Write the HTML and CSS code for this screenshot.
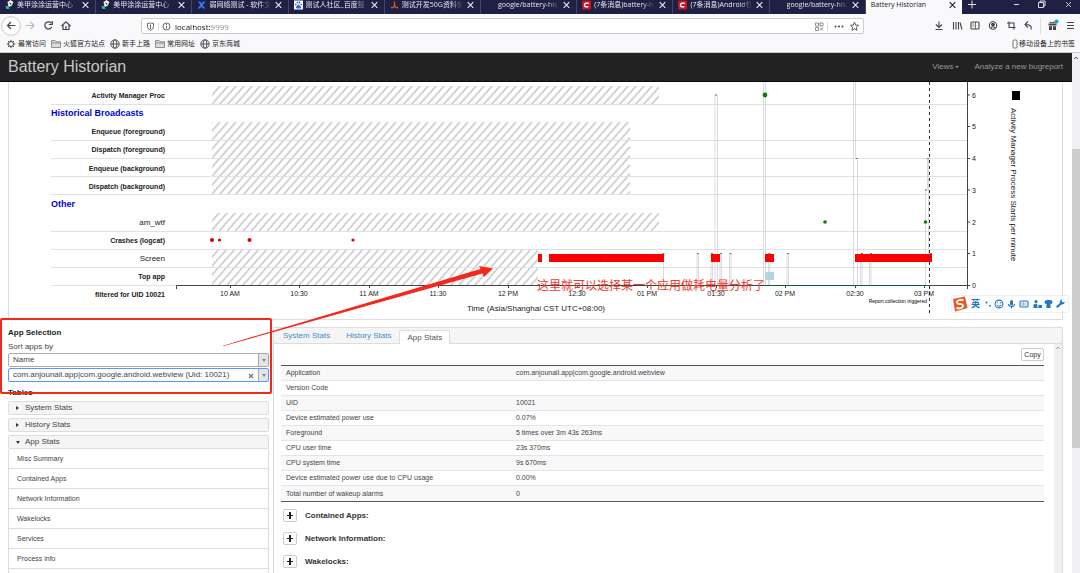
FILE: index.html
```html
<!DOCTYPE html>
<html lang="zh-CN">
<head>
<meta charset="utf-8">
<title>Battery Historian</title>
<link rel="stylesheet" href="styles.css">
</head>
<body>
<svg class="defs" aria-hidden="true">
  <symbol id="x" viewBox="0 0 8 8"><path d="M1.5 1.5 6.5 6.5M6.5 1.5 1.5 6.5" fill="none" stroke="currentColor" stroke-width="1"/></symbol>
  <symbol id="leaf" viewBox="0 0 8 10"><path d="M2 2 5 0 8 2 6 6 3 7Z" fill="#eee"/><path d="M0 6 3 6 4 9 1 9Z" fill="#2fbf8a"/><path d="M4 3 6 3 5 5Z" fill="#333"/></symbol>
  <symbol id="csdn" viewBox="0 0 10 10"><rect width="10" height="10" rx="1" fill="#c9151b"/><path d="M7.6 3H4.6Q3 3 2.8 5T4.2 7H7" fill="none" stroke="#fff" stroke-width="1.6"/></symbol>
  <symbol id="folder" viewBox="0 0 10 10"><path d="M.5 8.5V1.5H4L5 2.8H9.5V8.5ZM.5 4H9.5" fill="#ddd" stroke="#777" stroke-width=".8"/></symbol>
  <symbol id="globe" viewBox="0 0 10 10"><g fill="none" stroke="#444" stroke-width=".9"><circle cx="5" cy="5" r="4.2"/><ellipse cx="5" cy="5" rx="1.9" ry="4.2"/><path d="M.8 5H9.2"/></g></symbol>
</svg>

<header class="browser">
  <nav class="tabs">
    <a class="tab" href="#"><svg class="fav"><use href="#leaf"/></svg><span class="tab-name">美甲涂涂运营中心</span><svg class="close"><use href="#x"/></svg></a>
    <a class="tab" href="#"><svg class="fav"><use href="#leaf"/></svg><span class="tab-name">美甲涂涂运营中心</span><svg class="close"><use href="#x"/></svg></a>
    <a class="tab" href="#"><svg class="fav" viewBox="0 0 10 10"><path d="M1 1H3.5L5 3 7 1H9.5L6.5 5 9 9H6.5L5 7 3 9H.5L3.8 5Z" fill="#2e7df0"/></svg><span class="tab-name">弱网络测试 - 软件文</span><svg class="close"><use href="#x"/></svg></a>
    <a class="tab" href="#"><svg class="fav" viewBox="0 0 10 10"><rect width="10" height="10" fill="#fff"/><g fill="#3467dc"><path d="M5 4.2 8 7.2Q8 9 6.5 8.8H3.5Q2 9 2 7.2Z"/><circle cx="2" cy="4.5" r="1"/><circle cx="3.8" cy="2.2" r="1"/><circle cx="6.2" cy="2.2" r="1"/><circle cx="8" cy="4.5" r="1"/></g></svg><span class="tab-name">测试人社区_百度搜</span><svg class="close"><use href="#x"/></svg></a>
    <a class="tab" href="#"><svg class="fav" viewBox="0 0 10 10"><path d="M5 1V6M5 5 3.5 8H1M5 5 6.5 8H9" fill="none" stroke="#e5562a" stroke-width="1.4"/></svg><span class="tab-name">测试开发50G资料领</span><svg class="close"><use href="#x"/></svg></a>
    <a class="tab" href="#"><svg class="fav"></svg><span class="tab-name">google/battery-his</span><svg class="close"><use href="#x"/></svg></a>
    <a class="tab" href="#"><svg class="fav"><use href="#csdn"/></svg><span class="tab-name">(7条消息)battery-h</span><svg class="close"><use href="#x"/></svg></a>
    <a class="tab" href="#"><svg class="fav"><use href="#csdn"/></svg><span class="tab-name">(7条消息)Android性</span><svg class="close"><use href="#x"/></svg></a>
    <a class="tab" href="#"><svg class="fav"></svg><span class="tab-name">google/battery-his</span><svg class="close"><use href="#x"/></svg></a>
    <a class="tab active" href="#"><span class="tab-name">Battery Historian</span><svg class="close"><use href="#x"/></svg></a>
    <svg class="window-buttons" viewBox="0 0 118 14"><g fill="none" stroke="#ddd"><path d="M6 4.5H14M10 .5V8.500M52 4.500H57"/><path d="M76.500 2.500H81.500V7.500H76.500ZM78 2.500V1H83V6H81.500"/><path d="M104 2 109 7M109 2 104 7" stroke-width=".9"/></g></svg>
  </nav>

  <div class="toolbar">
    <svg class="nav-icons" viewBox="0 0 84 24"><circle cx="11" cy="12" r="9.300" fill="#fff" stroke="#bbb" stroke-width=".8"/><g fill="none" stroke="#444" stroke-width="1.200"><path d="M15.500 11.500H7.500M11 8 7.500 11.500 11 15"/><path d="M26 11.500H34M30.500 8 34 11.500 30.500 15" stroke="#bbb"/><path d="M51.500 9.500A3.600 3.600 0 1 0 51.700 13"/><path d="M52.300 7V10.500H48.800" /><path d="M61.500 12 66 7.800 70.500 12M63 11V15.500H69V11"/><path d="M66 12V15.500"/></g></svg>
    <div class="urlbar">
      <svg class="url-icons" viewBox="0 0 32 15"><g fill="none" stroke="#555" stroke-width=".9"><path d="M5.500 4.500Q8 4.500 8.500 4 9 4.500 11.500 4.500V7.500Q11.500 10 8.500 11.500 5.500 10 5.500 7.500Z"/><path d="M8.500 5.500V10"/><circle cx="24.500" cy="7.500" r="3.500"/><path d="M24.500 7V9.500M24.500 5.200V6.200"/></g><path d="M16.500 3V12" stroke="#ddd"/></svg>
      <input class="url" aria-label="Address" value="localhost:9999">
      <svg class="url-actions" viewBox="0 0 50 15"><path d="M2.500 4H5.500V7H2.500ZM7 4H10V7H7ZM2.500 8.500H5.500V11.500H2.500ZM7 8.500 10 11.500M10 8.500 7 11.500" fill="none" stroke="#777" stroke-width=".8"/><path d="M14.500 3V12" stroke="#ddd"/><g fill="#444"><circle cx="22.500" cy="7.500" r="1"/><circle cx="26" cy="7.500" r="1"/><circle cx="29.500" cy="7.500" r="1"/></g><path d="M41.500 3.200 42.700 6 45.500 6.300 43.400 8.300 44 11.300 41.500 9.700 39 11.300 39.600 8.300 37.500 6.300 40.300 6Z" fill="none" stroke="#444" stroke-width=".9"/></svg>
    </div>
    <svg class="tool-icons" viewBox="0 0 150 24"><g fill="none" stroke="#444" stroke-width="1.100"><path d="M9 7.500V13M6 10.500 9 13.500 12 10.500M5.500 15.500H12.500"/><path d="M23.500 8V15.500M26 8V15.500M28.500 8V15.500M30 8.500 32 15.500"/><rect x="41" y="8" width="8" height="7" rx="1"/><path d="M42.500 10H44.500M42.500 12H44.500M45.500 8V15" stroke-width=".7"/><circle cx="63" cy="11.500" r="3.700"/><circle cx="63" cy="10.500" r="1.300" fill="#444"/><path d="M60.800 14Q63 11.500 65.200 14"/><path d="M77 9H84V15.500M79 7.500V13.500H85.500"/><path d="M101 15.500Q102.500 10.500 95 10.500M98 7.500 95 10.500 98 13.500"/><path d="M137 8.500H144M137 11.500H144M137 14.500H144"/></g><path d="M110.500 4V20" stroke="#ddd"/><path d="M118.500 9.500H126.500V11.500H118.500ZM119 12.200H122V16H119ZM123 12.200H126V16H123ZM120 9 119.500 7.500 122 8.500 124 7.500 125 9Z" fill="#444"/><circle cx="126.500" cy="7.500" r="2" fill="#00a6e8"/></svg>
  </div>

  <nav class="bookmarks">
    <a href="#"><svg viewBox="0 0 10 10"><circle cx="5" cy="5" r="2.500" fill="none" stroke="#444"/><path d="M5 .8V2.500M5 7.500V9.200M.8 5H2.500M7.500 5H9.200M2 2 3.200 3.200M6.800 6.800 8 8M8 2 6.800 3.200M3.200 6.800 2 8" stroke="#444"/></svg>最常访问</a>
    <a href="#"><svg><use href="#folder"/></svg>火狐官方站点</a>
    <a href="#"><svg><use href="#globe"/></svg>新手上路</a>
    <a href="#"><svg><use href="#folder"/></svg>常用网址</a>
    <a href="#"><svg><use href="#globe"/></svg>京东商城</a>
    <a class="mobile" href="#"><svg viewBox="0 0 6 10"><rect x="1" y="1" width="4" height="8" rx="1" fill="none" stroke="#555" stroke-width=".8"/></svg>移动设备上的书签</a>
  </nav>
</header>

<div class="viewport">
  <div class="page">
    <header class="navbar">
      <a class="brand" href="#">Battery Historian</a>
      <a class="nav-link" href="#">Views<span class="caret"></span></a>
      <a class="nav-link" href="#">Analyze a new bugreport</a>
    </header>

    <section class="chart-panel">
      <svg class="chart" viewBox="9 82 1053 237" role="img" aria-label="Battery timeline">
        <defs><pattern id="hatch" width="8" height="9" patternUnits="userSpaceOnUse" x="212" y="86"><path d="M-1 10 9 -1M-1 1 1 -1M7 10 9 8" stroke="#d2d2d5" stroke-width="2"/></pattern></defs>
        <g fill="url(#hatch)"><path d="M212 86H659V104H212ZM212 122H630V195H212ZM212 213H659V231H212ZM212 249H538V285H212Z"/></g>
        <path class="grid" d="M51 104.500H967M51 140.500H967M51 158.500H967M51 176.500H967M51 194.500H967M51 231.500H967M51 249.500H967M51 267.500H967M51 285.500H176"/>
        <path class="series" d="M663.500 285V253.500M697 285V253.500H698.500V285M711 285V253.500H712.500V285M715 285V95H717.500V285M720 285V253.500H721.500V285M729.500 285V253.500H731V285M763.500 285V82M765.500 82V285M768.500 285V253.500H770V285M787 285V253.500H788.500V285M853.500 285V82M855.500 82V158.500H857.500V285M860.500 285V253.500H862V285M869.500 285V253.500H871V285M925.500 285V190H927.500V158.500H928.500V253.500H931"/>
        <path class="caps" d="M662.500 253.500h2M697 253.500h2M711 253.500h2M715 95h2M720 253.500h2M729.500 253.500h2M768.500 253.500h2M787 253.500h2M856 158.500h2M861 253.500h2M870 253.500h2M925 190h2M927 158.500h2M930 253.500h2"/>
        <path d="M538 254H542V262H538ZM549 254H664V262H549ZM711 254H720V262H711ZM765 254H774V262H765ZM855 254H932V262H855Z" fill="#f00"/>
        <path d="M600.500 254V262" stroke="#d00" stroke-width=".6"/>
        <rect x="765" y="272" width="9" height="8" fill="#b4d3e3"/>
        <g fill="#e00000"><circle cx="212" cy="240" r="2"/><circle cx="219.500" cy="240" r="1.600"/><circle cx="249.500" cy="240" r="2"/><circle cx="353" cy="240" r="1.600"/></g>
        <g fill="#0a7f0a"><circle cx="765" cy="95" r="2.400"/><circle cx="825" cy="222" r="1.800"/><circle cx="925.500" cy="222" r="1.800"/></g>
        <path class="axis" d="M176.500 289V285.500H967.500V82M967.500 285V289M230.500 285V288M299.500 285V288M369.500 285V288M438.500 285V288M508.500 285V288M577.500 285V288M647.500 285V288M716.500 285V288M785.500 285V288M855.500 285V288M924.500 285V288M967 95H970M967 126.500H970M967 158.500H970M967 190H970M967 222H970M967 253.500H970M967 285.500H970"/>
        <path d="M765 285.500H925" stroke="#063" stroke-width="1"/>
        <path d="M929.500 82V316" stroke="#333" stroke-dasharray="3 3"/>
        <g class="row-label"><text x="165" y="98">Activity Manager Proc</text><text x="165" y="134">Enqueue (foreground)</text><text x="165" y="152">Dispatch (foreground)</text><text x="165" y="171">Enqueue (background)</text><text x="165" y="189">Dispatch (background)</text><text class="plain" x="165" y="225">am_wtf</text><text x="165" y="243">Crashes (logcat)</text><text class="plain" x="165" y="261">Screen</text><text x="165" y="279">Top app</text><text x="165" y="297">filtered for UID 10021</text></g>
        <g class="group-label"><text x="51" y="116">Historical Broadcasts</text><text x="51" y="207">Other</text></g>
        <g class="tick"><text x="230" y="296">10 AM</text><text x="299" y="296">10:30</text><text x="369" y="296">11 AM</text><text x="438" y="296">11:30</text><text x="508" y="296">12 PM</text><text x="577" y="296">12:30</text><text x="647" y="296">01 PM</text><text x="716" y="296">01:30</text><text x="785" y="296">02 PM</text><text x="855" y="296">02:30</text><text x="924" y="296">03 PM</text><text x="974" y="98">6</text><text x="974" y="129">5</text><text x="974" y="161">4</text><text x="974" y="193">3</text><text x="974" y="225">2</text><text x="974" y="256">1</text><text x="974" y="288">0</text></g>
        <text class="axis-title" x="536" y="311">Time (Asia/Shanghai CST UTC+08:00)</text>
        <text class="note" x="927" y="303">Report collection triggered</text>
        <rect x="1012" y="91" width="8" height="9"/>
        <text class="legend" transform="translate(1011 108) rotate(90)">Activity Manager Process Starts per minute</text>
      </svg>
    </section>

    <main class="columns">
      <aside class="sidebar">
        <h2 class="side-title">App Selection</h2>
        <label class="side-label" for="sort">Sort apps by</label>
        <div class="picker"><select id="sort"><option>Name</option></select><span class="drop"></span></div>
        <div class="picker focused"><select id="app" aria-label="Application"><option>com.anjounail.app|com.google.android.webview (Uid: 10021)</option></select><button class="clear" aria-label="Clear selection"><svg viewBox="0 0 6 6"><path d="M1 1 5 5M5 1 1 5" stroke="#777" stroke-width="1.300"/></svg></button><span class="drop"></span></div>
        <h2 class="side-title tables-title">Tables</h2>
        <nav class="accordion">
          <button class="group"><span class="arrow"></span>System Stats</button>
          <button class="group"><span class="arrow"></span>History Stats</button>
          <div>
            <button class="group" aria-expanded="true"><span class="arrow down"></span>App Stats</button>
            <ul class="items"><li><a href="#">Misc Summary</a></li><li><a href="#">Contained Apps</a></li><li><a href="#">Network Information</a></li><li><a href="#">Wakelocks</a></li><li><a href="#">Services</a></li><li><a href="#">Process info</a></li><li></li></ul>
          </div>
        </nav>
      </aside>

      <section class="details">
        <nav class="detail-tabs"><a href="#">System Stats</a><a href="#">History Stats</a><a class="current" href="#">App Stats</a></nav>
        <div class="detail-body">
          <div class="detail-content">
            <button class="copy">Copy</button>
            <table class="stats">
              <tr><th scope="row">Application</th><td>com.anjounail.app|com.google.android.webview</td></tr>
              <tr><th scope="row">Version Code</th><td></td></tr>
              <tr><th scope="row">UID</th><td>10021</td></tr>
              <tr><th scope="row">Device estimated power use</th><td>0.07%</td></tr>
              <tr><th scope="row">Foreground</th><td>5 times over 3m 43s 263ms</td></tr>
              <tr><th scope="row">CPU user time</th><td>23s 370ms</td></tr>
              <tr><th scope="row">CPU system time</th><td>9s 670ms</td></tr>
              <tr><th scope="row">Device estimated power use due to CPU usage</th><td>0.00%</td></tr>
              <tr><th scope="row">Total number of wakeup alarms</th><td>0</td></tr>
            </table>
            <div class="sections">
              <h3><button class="plus" aria-label="Expand Contained Apps"></button>Contained Apps:</h3>
              <h3><button class="plus" aria-label="Expand Network Information"></button>Network Information:</h3>
              <h3><button class="plus" aria-label="Expand Wakelocks"></button>Wakelocks:</h3>
            </div>
          </div>
          <div class="inner-scroll"><svg viewBox="0 0 8 8"><path d="M2 5 4 3 6 5" fill="none" stroke="#aaa"/></svg></div>
        </div>
      </section>
    </main>
  </div>
  <div class="scrollbar"><svg viewBox="0 0 8 8"><path d="M2 6 4 4 6 6" fill="none" stroke="#555"/></svg><div class="thumb"></div></div>
</div>

<svg class="annotation" viewBox="0 0 1080 573">
  <rect x="1" y="319" width="270" height="74" rx="1" fill="none" stroke="#ee2a1e" stroke-width="2"/>
  <path d="M223 345.700 480.500 269 479 266 493 268.500 484 277 482.500 273.500 223 346.300Z" fill="#f5261b"/>
  <text x="537" y="290">这里就可以选择某一个应用做耗电量分析了</text>
</svg>

<div class="ime">
  <svg class="sogou" viewBox="0 0 16 16"><path d="M1 3 13 .5 15.500 12 3 15.500Z" fill="#ea5a24"/><path d="M11.500 4Q5 3.500 5 6T9 8Q12 9 10.500 11T4.500 12" fill="none" stroke="#fff" stroke-width="1.800"/></svg>
  <span>英</span>
  <svg class="ime-icons" viewBox="0 0 84 12"><g fill="none" stroke="#1e76c4" stroke-width="1.100"><circle cx="16" cy="6" r="3.900"/><path d="M14 7Q16 9.500 18 7M14.500 4.200V5.200M17.500 4.200V5.200"/><path d="M25.500 6Q25.500 8.500 28.500 8.500T31.500 6M28.500 8.500V10.500"/><rect x="37" y="3" width="8" height="6" rx="1"/><path d="M38.500 5H43.500M38.500 7H43.500" stroke-dasharray="1 .6"/></g><g fill="#1e76c4"><circle cx="3.500" cy="4.500" r="1.100"/><path d="M6 7h2l-1 2.500z"/><rect x="27" y="2" width="3" height="5.500" rx="1.500"/><circle cx="53" cy="3.500" r="1.600"/><path d="M50.500 10V7Q51 5.500 53 5.500L54.500 7V10ZM55.500 7H59V10H55.500Z"/><path d="M61.500 3 64 2H67L69.500 3 69 6 67.500 5.500V10H63.500V5.500L62 6Z"/><path d="M73 8.500 77 5Q76 2 79.500 1.500L78.500 3.500 80 4.500 81.500 3.500Q82 6.500 78.500 6.500L74.500 10Z"/></g></svg>
</div>
</body>
</html>
```
FILE: styles.css
```css
* { box-sizing: border-box; }
body { margin: 0; height: 100vh; display: flex; flex-direction: column; overflow: hidden; position: relative; background: #fff; color: #444; font: 8px/10px "Liberation Sans", "Noto Sans CJK SC", sans-serif; }
a { color: inherit; text-decoration: none; }
button, select, input { font: inherit; color: inherit; margin: 0; padding: 0; border: 0; background: none; border-radius: 0; }
h2, h3, ul { margin: 0; padding: 0; font-size: inherit; list-style: none; }
svg { display: block; flex: none; }
.defs { width: 0; height: 0; position: absolute; }

.browser { flex: none; background: #f9f9fb; color: #222; font: 7px/10px "Open Sans", "Noto Sans CJK SC", sans-serif; border-bottom: 1px solid #ccc; }
.tabs { display: grid; grid-template-columns: repeat(10, minmax(0, 1fr)) 118px; height: 14px; background: #1f2044; color: #e8e8f0; }
.tab { display: flex; align-items: flex-start; padding: 0 5px; gap: 3px; border-right: 1px solid #44456a; white-space: nowrap; }
.fav, .close { width: 9px; height: 10px; }
.close { margin-left: auto; }
.tab-name { flex: 1; overflow: hidden; mask-image: linear-gradient(to right, #000 80%, transparent); }
.active { background: #f9f9fb; color: #222; border: 0; }
.active .tab-name { mask-image: none; }
.window-buttons { width: 118px; height: 14px; }
.toolbar { display: flex; align-items: center; height: 24px; }
.nav-icons { width: 84px; height: 24px; }
.urlbar { flex: 1; margin: 0 66px 0 57px; height: 16px; display: flex; align-items: center; background: #fff; border: 1px solid #ccc; border-radius: 2px; }
.url-icons { width: 32px; height: 15px; }
.url { flex: 1; min-width: 0; height: 14px; font-size: 8px; margin-left: 1px; outline: 0; color: transparent; background: linear-gradient(to right, #111 35px, #888 35px); background-clip: text; -webkit-background-clip: text; }
.url-actions { width: 50px; height: 15px; }
.tool-icons { width: 150px; height: 24px; }
.bookmarks { display: flex; gap: 5px; height: 14px; padding: 0 5px 3px 6px; align-items: center; }
.bookmarks a { display: flex; align-items: center; gap: 2px; }
.bookmarks svg { width: 10px; height: 10px; }
.bookmarks .mobile { margin-left: auto; gap: 1px; }
.bookmarks .mobile svg { width: 6px; }

.viewport { flex: 1; min-height: 0; display: flex; }
.page { flex: 1; min-width: 0; display: flex; flex-direction: column; }
.navbar { flex: none; height: 29px; background: #222; color: #999; display: flex; align-items: center; gap: 16px; padding: 0 9px 0 8px; border-bottom: 1px solid #080808; }
.brand { font-size: 16px; line-height: 20px; color: #c8c8c8; margin-right: auto; }
.nav-link { display: flex; align-items: center; gap: 1px; }
.caret { border: 2px solid transparent; border-top-color: currentColor; border-bottom: 0; }
.chart-panel { flex: none; margin: 0 9px 7px 8px; border: 1px solid #ddd; border-top: 0; }
.chart { width: 100%; height: auto; }
.grid { stroke: #e0e0e6; fill: none; }
.series { stroke: #ccccd2; fill: none; stroke-width: 1; opacity: .7; }
.caps { stroke: #777; }
.axis { stroke: #444; fill: none; }
.row-label text { font-weight: bold; font-size: 7px; text-anchor: end; fill: #222; }
.row-label .plain { font-weight: normal; font-size: 8px; }
.group-label text { font-weight: bold; font-size: 9px; fill: #0000dd; }
.tick text { font-size: 7px; text-anchor: middle; fill: #222; }
.axis-title { font-size: 8px; text-anchor: middle; fill: #222; }
.note { font-size: 5px; text-anchor: end; }
.legend { font-size: 8px; fill: #222; }

.columns { flex: 1; min-height: 0; display: grid; grid-template-columns: 261px minmax(0, 1fr); gap: 4px; padding: 0 9px 0 8px; }
.sidebar { display: flex; flex-direction: column; padding-top: 1px; }
.side-title { font-weight: bold; color: #222; }
.side-label { margin: 4px 0 1px; }
.picker { position: relative; height: 14px; margin-bottom: 1px; }
.picker select { display: block; appearance: none; width: 100%; height: 14px; padding: 0 24px 0 4px; border: 1px solid #aaa; border-radius: 2px; color: #444; background: linear-gradient(to left, #e4e4e4 9px, #aaa 9px, #aaa 10px, transparent 10px), #fff; }
.picker.focused select { border-color: #5897fb; }
.drop { position: absolute; right: 3px; top: 6px; border: 2px solid transparent; border-top: 3px solid #888; border-bottom: 0; pointer-events: none; }
.clear { position: absolute; right: 14px; top: 4px; width: 7px; height: 7px; }
.clear svg { width: 6px; height: 6px; }
.tables-title { margin-top: 5px; }
.accordion { display: flex; flex-direction: column; gap: 3px; margin-top: 3px; }
.group { width: 100%; height: 14px; display: flex; align-items: center; gap: 5px; padding: 0 7px; background: #f5f5f5; border: 1px solid #ddd; border-radius: 2px; }
.arrow { border: 2px solid transparent; border-left: 3px solid #333; border-right: 0; width: 4px; }
.arrow.down { border: 2px solid transparent; border-top: 3px solid #333; border-bottom: 0; }
.items { font-size: 7px; border: 1px solid #ddd; border-top: 0; }
.items li { height: 20px; padding: 5px 8px; border-bottom: 1px solid #ddd; }

.details { border: 1px solid #ddd; border-bottom: 0; display: flex; flex-direction: column; min-height: 0; }
.detail-tabs { flex: none; height: 16px; display: flex; align-items: flex-end; background: #f5f5f5; border-bottom: 1px solid #ddd; color: #428bca; padding-left: 1px; }
.detail-tabs a { padding: 3px 8px 2px; height: 15px; }
.detail-tabs .current { background: #fff; color: #555; border: 1px solid #ddd; border-bottom: 0; height: 14px; padding: 2px 7px; border-radius: 2px 2px 0 0; margin-bottom: -1px; }
.detail-body { flex: 1; min-height: 0; display: flex; }
.detail-content { flex: 1; padding: 4px 10px 0 7px; display: flex; flex-direction: column; min-width: 0; }
.copy { align-self: flex-end; width: 23px; height: 13px; border: 1px solid #ccc; border-radius: 2px; font-size: 7px; color: #333; }
.stats { margin-top: 4px; border-collapse: separate; border-spacing: 0; border-top: 1px solid #555; border-bottom: 1px solid #555; font-size: 7px; table-layout: fixed; width: 100%; }
.stats th, .stats td { height: 15px; padding: 0 5px; font-weight: normal; text-align: left; border-bottom: 1px solid #e5e5e5; }
.stats th { width: 230px; }
.stats tr:nth-child(odd) { background: #f8f8fa; }
.stats tr:last-child > * { border-bottom: 0; }
.sections { display: flex; flex-direction: column; gap: 10px; padding: 7px 2px 0; }
.sections h3 { display: flex; align-items: center; gap: 8px; height: 13px; color: #333; }
.plus { width: 14px; height: 13px; border: 1px solid #ccc; border-radius: 2px; background: linear-gradient(#222, #222) center / 6px 1px no-repeat, linear-gradient(#222, #222) center / 2px 7px no-repeat; }
.inner-scroll { width: 8px; background: #f0f0f2; }
.inner-scroll svg, .scrollbar svg { width: 8px; height: 8px; }
.scrollbar { flex: none; width: 8px; background: #f0f0f2; display: flex; flex-direction: column; }
.thumb { margin-top: 88px; height: 299px; background: #cdcdcd; }

.annotation { position: absolute; left: 0; top: 0; width: 100%; pointer-events: none; font: 12px "Noto Sans CJK SC", sans-serif; }
.annotation text { fill: #ee3a2e; }
.ime { position: absolute; left: 952px; top: 296px; height: 16px; display: flex; align-items: center; gap: 3px; padding-right: 1px; background: linear-gradient(#fff, #fff) 0 1px / 100% 14px no-repeat; box-shadow: 0 0 1px #8bb8dd; color: #1e76c4; font: bold 9px/12px "Noto Sans CJK SC", sans-serif; }
.sogou { width: 16px; height: 16px; }
.ime-icons { width: 84px; height: 12px; }
```
